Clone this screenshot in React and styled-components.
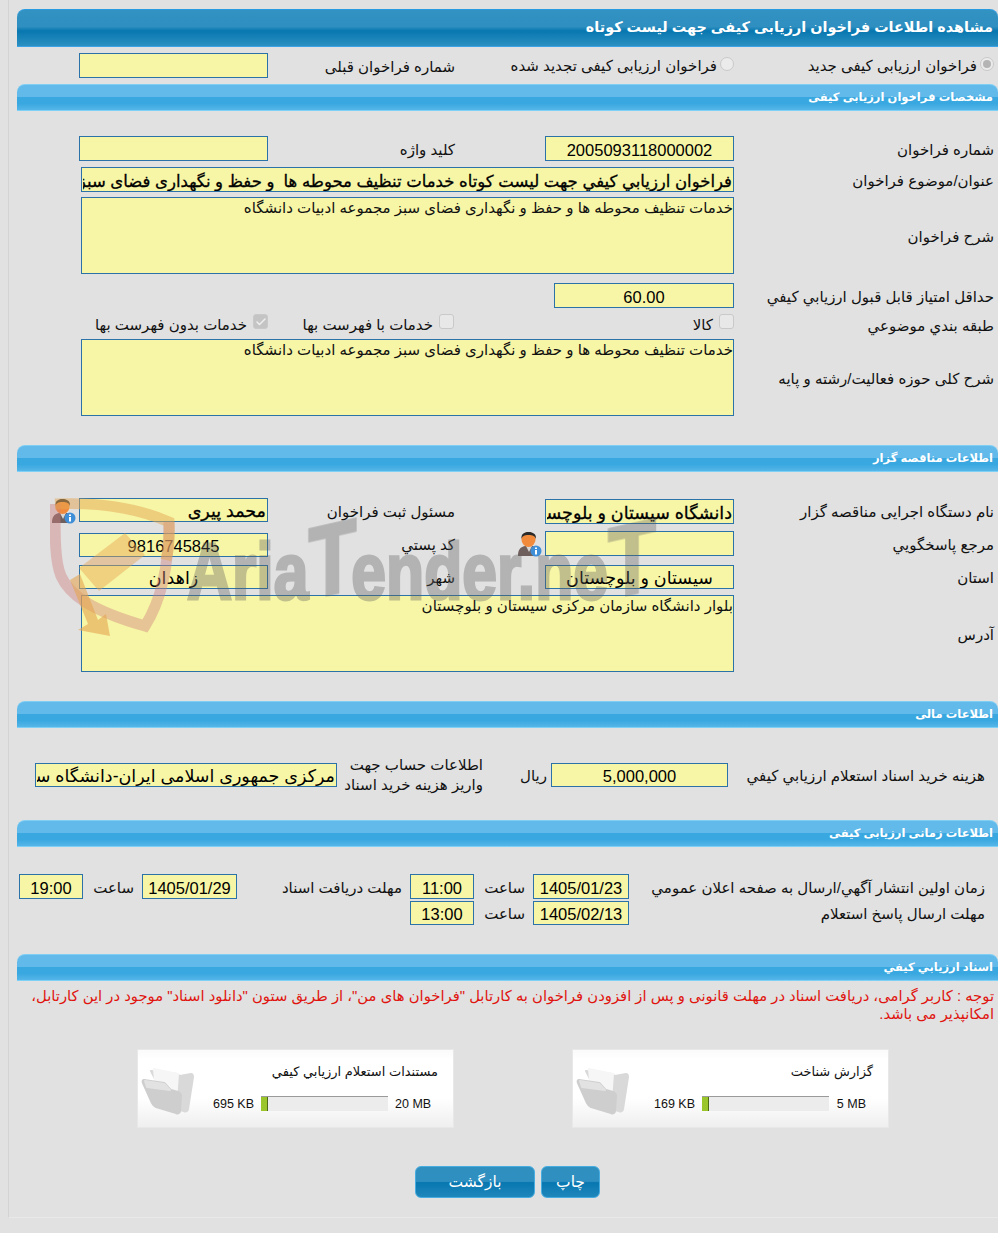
import React from 'react'
import styled, { createGlobalStyle } from 'styled-components'
import { Check } from 'lucide-react'

const GlobalStyle = createGlobalStyle`
  html, body {
    margin: 0;
    background: #e1e1e1;
  }
  body {
    font-family: "Liberation Sans", "DejaVu Sans", sans-serif;
    font-size: 15px;
    color: #111;
  }
`

const Frame = styled.div`
  position: relative;
  direction: rtl;
  box-sizing: border-box;
  width: 990px;
  height: 1218px;
  margin-left: 8px;
  padding: 9px 0 0 8px;
  border-left: 1px solid #d3d3d3;
  border-bottom: 1px solid #e9e9e9;
`

const TitleBar = styled.h1`
  box-sizing: border-box;
  height: 38px;
  margin: 0;
  padding-right: 5px;
  border-top: 1px solid #2b9be0;
  border-bottom: 1px solid #3ba4e6;
  border-radius: 8px 8px 0 0;
  background: linear-gradient(#3292c2 0, #2e8fc0 46%, #0877b0 58%, #1a84b8 80%, #2c90c2 100%);
  color: #fff;
  font-size: 14.4px;
  font-weight: bold;
  line-height: 35px;
`

const SectionBar = styled.h2`
  box-sizing: border-box;
  height: 27px;
  margin: ${p => p.$top}px 0 0;
  padding-right: 5px;
  border-top: 1px solid #7fcff5;
  border-bottom: 1px solid #7ed0f6;
  border-radius: 8px 8px 0 0;
  background: linear-gradient(#62baea 0, #62baea 46%, #3aa8e0 50%, #3aa8e0 75%, #55b6e8 100%);
  color: #fff;
  font-size: 11.5px;
  font-weight: bold;
  line-height: 25px;
`

const FormRow = styled.div`
  display: grid;
  grid-template-columns: 264px 189px 277px 189px 62px;
  height: ${p => p.$height || 25}px;
  margin-top: ${p => p.$top}px;
  align-items: center;
`

const Label = styled.label`
  padding-top: 2px;
  padding-right: ${p => p.$pad ?? 4}px;
  white-space: nowrap;
`

const FieldLabel = styled(Label)`
  padding-right: 90px;
`

const Field = styled.input.attrs({ readOnly: true, type: 'text' })`
  box-sizing: border-box;
  width: ${p => p.$width ? `${p.$width}px` : '100%'};
  height: ${p => p.$height || 25}px;
  margin: 0;
  padding: 3px 1px 0;
  border: 1px solid #2a72a8;
  border-radius: 0;
  outline: none;
  background: #f7f6a6;
  color: #000;
  font-family: inherit;
  font-size: ${p => p.$ar ? 17.5 : 16.5}px;
  text-align: ${p => p.$align || 'right'};
  align-self: ${p => p.$self || 'center'};
  -webkit-text-stroke: ${p => p.$bold ? '0.3px #000' : '0'};
`

const WideField = styled(Field)`
  grid-column: 2 / 5;
`

const Memo = styled.textarea.attrs({ readOnly: true })`
  box-sizing: border-box;
  grid-column: 2 / 5;
  width: 653px;
  height: 77px;
  margin: 0;
  padding: 1px 0 0;
  border: 1px solid #2a72a8;
  border-radius: 0;
  outline: none;
  resize: none;
  background: #f7f6a6;
  color: #111;
  font-family: inherit;
  font-size: 15px;
`

const Option = styled.span`
  display: flex;
  align-items: center;
  gap: 3px;
  padding-right: ${p => p.$pad ?? 0}px;
  white-space: nowrap;
`

const RadioMark = styled.span`
  display: flex;
  flex-shrink: 0;
  align-items: center;
  justify-content: center;
  box-sizing: border-box;
  width: 14px;
  height: 14px;
  margin-top: -3px;
  border: 1px solid #c9c9c9;
  border-radius: 50%;
  background: #ebebeb;

  &::after {
    content: '';
    display: ${p => p.$checked ? 'block' : 'none'};
    width: 8px;
    height: 8px;
    border-radius: 50%;
    background: #b4b4b4;
  }
`

const CheckMark = styled.span`
  display: flex;
  flex-shrink: 0;
  align-items: center;
  justify-content: center;
  box-sizing: border-box;
  width: 15px;
  height: 15px;
  margin-top: -6px;
  margin-left: 3px;
  border: 1px solid #c9c9c9;
  border-radius: 3px;
  background: ${p => p.$checked ? '#c4c4c4' : '#e8e8e8'};
  color: #efefef;
`

const OptionCell = styled.div`
  padding-right: ${p => p.$pad ?? 0}px;
`

const IconCell = styled.div`
  display: flex;
  align-items: center;
  padding-right: 3px;
`

const LabelWithIcon = styled.div`
  display: flex;
  align-items: center;
  padding-right: 3px;
  white-space: nowrap;

  label {
    margin-right: 62px;
    padding: 2px 0 0;
  }
`

const CostRow = styled.div`
  display: grid;
  grid-template-columns: 270px 177px 68px 146px 302px;
  height: 40px;
  margin-top: 27px;
  align-items: center;
`

const TwoLines = styled.div`
  line-height: 20px;
  white-space: nowrap;
`

const TimeRow = styled.div`
  display: grid;
  grid-template-columns: 369px 96px 59px 64px 173px 95px 59px 64px;
  height: ${p => p.$height || 25}px;
  margin-top: ${p => p.$top}px;
  align-items: center;
`

const Notice = styled.p`
  height: 37px;
  margin: 6px 0 0;
  padding: 0 4px 0 14px;
  color: #e0140f;
  font-size: 14.8px;
  line-height: 18px;
`

const Cards = styled.div`
  display: flex;
  gap: 118px;
  margin-top: 25px;
  padding-right: 109px;
`

const Card = styled.div`
  display: flex;
  justify-content: space-between;
  box-sizing: border-box;
  width: 317px;
  height: 79px;
  padding: 0 0 0 3px;
  border: 1px solid #e8e8e8;
  background: linear-gradient(#fafafa 0, #fff 12%, #fff 62%, #efefef 100%);
`

const CardBody = styled.div`
  display: flex;
  flex-direction: column;
`

const CardTitle = styled.div`
  margin-top: 14px;
  padding-right: 15px;
  color: #111;
  font-size: 13px;
  line-height: 15px;
  white-space: nowrap;
`

const Usage = styled.div`
  display: flex;
  align-items: center;
  gap: 7px;
  height: 15px;
  margin-top: 17px;
  padding-right: 22px;
  color: #111;
  font-size: 12.5px;
`

const UsageText = styled.span`
  width: ${p => p.$width ? `${p.$width}px` : 'auto'};
  direction: ltr;
  text-align: right;
  white-space: nowrap;
`

const Meter = styled.div`
  display: flex;
  box-sizing: border-box;
  width: 127px;
  height: 15px;
  border-top: 1px solid #9a9a9a;
  background: #ececec;
  direction: ltr;
`

const MeterFill = styled.div`
  box-sizing: border-box;
  height: 14px;
  border-right: 1px solid #4f6a14;
  background: #9ac52b;
`

const Actions = styled.div`
  display: flex;
  gap: 6px;
  margin-top: 38px;
  padding-right: 398px;
`

const ActionButton = styled.button`
  box-sizing: border-box;
  width: ${p => p.$width}px;
  height: 32px;
  padding: 0;
  border: 1px solid #47ade0;
  border-radius: 6px;
  background: linear-gradient(#2f90c0 0, #2e8fc0 48%, #0877b0 52%, #1e87bb 100%);
  color: #fff;
  font-family: inherit;
  font-size: 15.5px;
`

const FolderSvg = styled.svg`
  flex-shrink: 0;
  margin-top: 15px;

  path {
    stroke-width: 2px;
    stroke-linejoin: round;
  }
`

const Watermark = styled.div`
  position: absolute;
  left: 41px;
  top: 498px;
  width: 620px;
  height: 150px;
  direction: ltr;
  pointer-events: none;
`

const WatermarkName = styled.div`
  position: absolute;
  left: 137px;
  top: 26px;
  opacity: 0.36;
  color: #5f5f5f;
  font-family: "Liberation Sans", sans-serif;
  font-size: 80px;
  font-weight: bold;
  line-height: 80px;
  white-space: nowrap;
  -webkit-text-stroke: 3px #5f5f5f;
  transform: scaleX(0.78);
  transform-origin: left bottom;

  b {
    display: inline-block;
    margin-right: -6px;
    font-size: 100px;
    line-height: 80px;
    transform: skewY(-10deg);
    transform-origin: left bottom;
  }
`

const PersonIcon = () => (
  <svg width="25" height="26" viewBox="0 0 25 26">
    <path d="M1 25c0-6 2-9 7-10l4-1 4 1c3 1 5 3 5 10z" fill="#6e5f5c" />
    <path d="M9 15l3 6 3-6z" fill="#d8d8d8" />
    <ellipse cx="11.500" cy="8.500" rx="7" ry="7.500" fill="#f28a3c" />
    <path d="M4.500 8C4 3 7 1 11.500 1s8 2 7.500 7c-1-3-3-4-7.500-4S5.500 5 4.500 8z" fill="#2b2b2b" />
    <circle cx="19" cy="20" r="5.500" fill="#3f8fd8" />
    <rect x="18" y="19" width="2" height="4.500" fill="#fff" />
    <rect x="18" y="16.500" width="2" height="1.500" fill="#fff" />
  </svg>
)

const FolderIcon = () => (
  <FolderSvg width="54" height="50" viewBox="0 0 54 50">
    <path d="M10 6l26 3 3 2 11-2c2 0 2 1 2 3l-5 32c0 2-2 3-4 2l-14-3z" fill="#d9d9d9" stroke="#d9d9d9" />
    <path d="M13 4l24 5-2 27-20-8z" fill="#f6f6f6" stroke="#f6f6f6" />
    <path d="M3 15l20 3c2 1 4 5 7 7l7 2c2 1 3 2 3 4l-1 15c0 2-2 3-4 2L15 42c-2-1-3-2-4-4L2 18c-1-2 0-3 1-3z" fill="#cecece" stroke="#cecece" />
    <path d="M4 16l19 3c2 1 3 4 6 6l-23-3z" fill="#e2e2e2" stroke="#e2e2e2" />
  </FolderSvg>
)

const Shield = () => (
  <svg width="135" height="145" viewBox="0 0 135 145">
    <path d="M5 6c0 34 0 58 6 72 8 18 28 34 84 50 14-22 24-54 24-104" fill="none" stroke="#cf7f7f" strokeOpacity="0.42" strokeWidth="11" />
    <path d="M5 6c44-2 82 4 114 18 1 14 0 26-3 38" fill="none" stroke="#e4a552" strokeOpacity="0.5" strokeWidth="11" />
    <path d="M29 70l46-35 20 22-46 36z" fill="#e4a552" fillOpacity="0.45" />
    <path d="M30 76l18 46 8-6 4 22-32-6 10-6-18-44z" fill="#e4a552" fillOpacity="0.6" />
  </svg>
)

const Upload = ({ title, used, limit, limitWidth }) => (
  <Card>
    <CardBody>
      <CardTitle>{title}</CardTitle>
      <Usage>
        <UsageText $width={limitWidth}>{limit}</UsageText>
        <Meter>
          <MeterFill style={{ width: 7 }} />
        </Meter>
        <UsageText>{used}</UsageText>
      </Usage>
    </CardBody>
    <FolderIcon />
  </Card>
)

const App = () => {
  const desc = 'خدمات تنظیف محوطه ها و حفظ و نگهداری فضای سبز مجموعه ادبیات دانشگاه'
  return (
    <>
      <GlobalStyle />
      <Frame>
        <TitleBar>مشاهده اطلاعات فراخوان ارزیابی کیفی جهت لیست کوتاه</TitleBar>

        <FormRow $top={6}>
          <Option $pad={4}><RadioMark $checked />فراخوان ارزیابی کیفی جدید</Option>
          <Option><RadioMark />فراخوان ارزیابی کیفی تجدید شده</Option>
          <FieldLabel>شماره فراخوان قبلی</FieldLabel>
          <Field value="" />
        </FormRow>

        <SectionBar $top={6}>مشخصات فراخوان ارزیابی کیفی</SectionBar>

        <FormRow $top={25}>
          <Label>شماره فراخوان</Label>
          <Field value="2005093118000002" $align="center" />
          <FieldLabel>کلید واژه</FieldLabel>
          <Field value="" />
        </FormRow>
        <FormRow $top={6}>
          <Label>عنوان/موضوع فراخوان</Label>
          <WideField $width={653} $bold value="فراخوان ارزیابي كيفي جهت ليست كوتاه خدمات تنظيف محوطه ها  و حفظ و نگهداری فضای سبز مجموعه ادبیات دانشگاه" />
        </FormRow>
        <FormRow $top={5} $height={77}>
          <Label>شرح فراخوان</Label>
          <Memo value={desc} />
        </FormRow>
        <FormRow $top={9}>
          <Label>حداقل امتیاز قابل قبول ارزیابي کیفي</Label>
          <Field $width={180} value="60.00" $align="center" />
        </FormRow>
        <FormRow $top={5} $height={23}>
          <Label>طبقه بندي موضوعي</Label>
          <OptionCell><Option><CheckMark />کالا</Option></OptionCell>
          <OptionCell $pad={91}><Option><CheckMark />خدمات با فهرست بها</Option></OptionCell>
          <OptionCell><Option><CheckMark $checked><Check size={12} strokeWidth={3} /></CheckMark>خدمات بدون فهرست بها</Option></OptionCell>
        </FormRow>
        <FormRow $top={3} $height={77}>
          <Label>شرح کلی حوزه فعالیت/رشته و پایه</Label>
          <Memo value={desc} />
        </FormRow>

        <SectionBar $top={29}>اطلاعات مناقصه گزار</SectionBar>

        <FormRow $top={26} $height={26}>
          <Label>نام دستگاه اجرایی مناقصه گزار</Label>
          <Field $self="end" $ar $bold value="دانشگاه سیستان و بلوچستان" />
          <FieldLabel>مسئول ثبت فراخوان</FieldLabel>
          <Field $self="start" $height={24} $ar $bold value="محمد پیری" />
          <IconCell><PersonIcon /></IconCell>
        </FormRow>
        <FormRow $top={7} $height={26}>
          <Label>مرجع پاسخگویي</Label>
          <Field $self="start" value="" />
          <LabelWithIcon><PersonIcon /><label>کد پستي</label></LabelWithIcon>
          <Field $self="end" $height={24} $align="center" value="9816745845" />
        </FormRow>
        <FormRow $top={8} $height={24}>
          <Label>استان</Label>
          <Field $height={24} $ar $align="center" value="سیستان و بلوچستان" />
          <FieldLabel>شهر</FieldLabel>
          <Field $height={24} $ar $align="center" value="زاهدان" />
        </FormRow>
        <FormRow $top={6} $height={77}>
          <Label>آدرس</Label>
          <Memo value="بلوار دانشگاه سازمان مرکزی سیستان و بلوچستان" />
        </FormRow>

        <SectionBar $top={29}>اطلاعات مالی</SectionBar>

        <CostRow>
          <Label $pad={13}>هزینه خرید اسناد استعلام ارزیابي کیفي</Label>
          <Field $height={24} $align="center" value="5,000,000" />
          <Label>ریال</Label>
          <TwoLines>اطلاعات حساب جهت<br />واریز هزینه خرید اسناد</TwoLines>
          <Field $height={24} $ar value="مرکزی جمهوری اسلامی ایران-دانشگاه سیستان و بلوچستان" />
        </CostRow>

        <SectionBar $top={25}>اطلاعات زمانی ارزیابی کیفی</SectionBar>

        <TimeRow $top={27}>
          <Label $pad={13}>زمان اولین انتشار آگهي/ارسال به صفحه اعلان عمومي</Label>
          <Field $align="center" value="1405/01/23" />
          <Label $pad={8}>ساعت</Label>
          <Field $align="center" value="11:00" />
          <Label $pad={8}>مهلت دریافت اسناد</Label>
          <Field $align="center" value="1405/01/29" />
          <Label $pad={8}>ساعت</Label>
          <Field $align="center" value="19:00" />
        </TimeRow>
        <TimeRow $top={2} $height={24}>
          <Label $pad={13}>مهلت ارسال پاسخ استعلام</Label>
          <Field $height={24} $align="center" value="1405/02/13" />
          <Label $pad={8}>ساعت</Label>
          <Field $height={24} $align="center" value="13:00" />
        </TimeRow>

        <SectionBar $top={29}>اسناد ارزیابي کیفي</SectionBar>

        <Notice>
          توجه : کاربر گرامی، دریافت اسناد در مهلت قانونی و پس از افزودن فراخوان به کارتابل "فراخوان های من"، از طریق ستون "دانلود اسناد" موجود در این کارتابل، امکانپذیر می باشد.
        </Notice>

        <Cards>
          <Upload title="گزارش شناخت" limit="5 MB" used="169 KB" limitWidth={30} />
          <Upload title="مستندات استعلام ارزیابي کیفي" limit="20 MB" used="695 KB" limitWidth={36} />
        </Cards>

        <Actions>
          <ActionButton $width={59}>چاپ</ActionButton>
          <ActionButton $width={120}>بازگشت</ActionButton>
        </Actions>

        <Watermark>
          <Shield />
          <WatermarkName>Aria<b>T</b>ender.ne<b>T</b></WatermarkName>
        </Watermark>
      </Frame>
    </>
  )
}

export default App
